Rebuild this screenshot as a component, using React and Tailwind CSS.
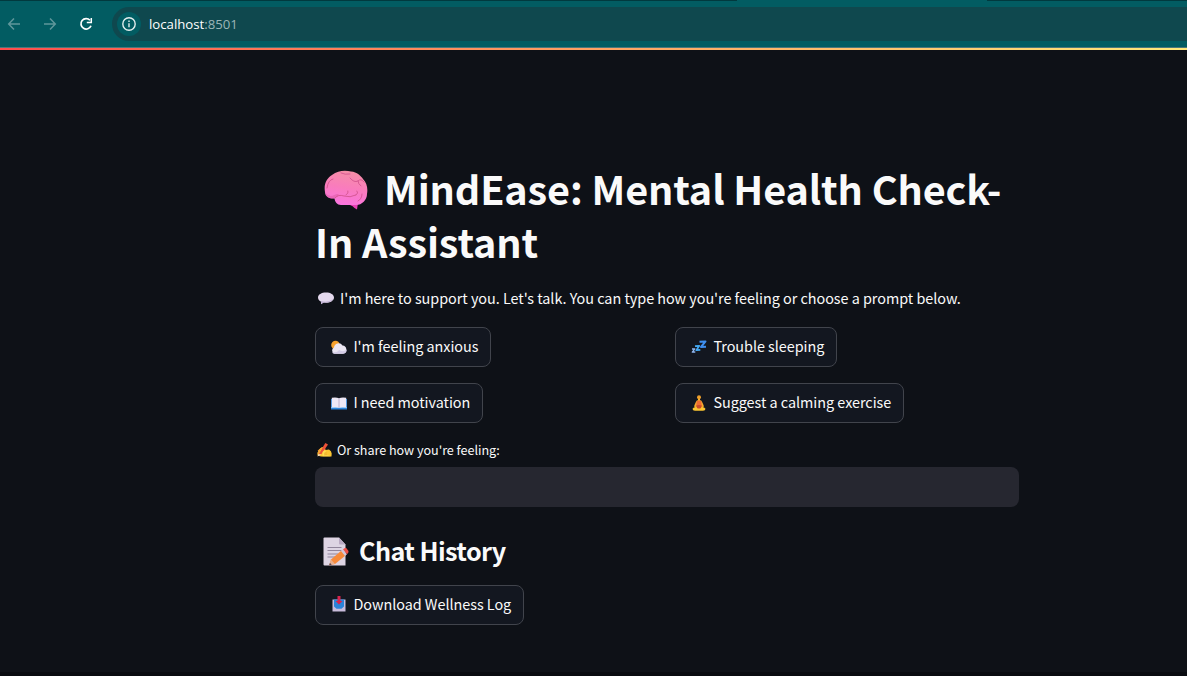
function Brain() {
  return (
    <svg viewBox="0 0 44 40" className="ml-[9px] mr-4 inline-block h-10 w-11 align-[-5px]">
      <defs>
        <linearGradient id="brain" x1="0.6" y1="0" x2="0.4" y2="1">
          <stop offset="0" stopColor="#f58fa6" />
          <stop offset="0.5" stopColor="#f97cbc" />
          <stop offset="1" stopColor="#fb74e0" />
        </linearGradient>
      </defs>
      <path d="M26 33 L34 33 L33 39.5 L30.500 38 Q29 36 26 35Z" fill="#e83fb4" />
      <path
        d="M1 22 C-0.500 14 3 8 8 5 C14 0 22 0 27 1.500 C33 2 37 6 39 9 C43 13 44 19 43 24 C43 30 38 35 32 35 L17 35 C13 35 11 32 10.500 28.500 C6 29 1 27 1 22Z"
        fill="url(#brain)"
      />
      <path d="M1.500 23 Q5 27.500 10.500 25 Q14 23 15 25 Q13 27 10.500 28.500 C6 29 2 27 1.500 23Z" fill="#d9559f" opacity="0.5" />
      <g fill="none" stroke="#d45590" strokeWidth="0.900" strokeLinecap="round">
        <path d="M17 3 Q21 5 26 4" />
        <path d="M26 8 Q30 13 34 11 Q37 8 40 12 M34 11 Q34 14 37 16" />
        <path d="M3 18 Q4 10 9 9" />
        <path d="M11 28 Q14 24 20 26 Q26 28 32 25 M32 25 Q35 23 33 21" />
        <path d="M22 25 Q25 23 24 21 M38 24 Q38 29 34 31" />
      </g>
    </svg>
  );
}

function Bubble() {
  return (
    <svg viewBox="0 0 16 13" className="ml-[3px] mr-[6px] h-[13px] w-4 shrink-0">
      <path d="M8 0.500 C12.500 0.500 16 2.500 16 5.500 C16 8.800 12 10.800 8 10.800 L5.500 10.600 L3 12.300 L3.200 9.800 C1.200 8.800 0 7.300 0 5.500 C0 2.500 3.500 0.500 8 0.500Z" fill="#e4d9ee" />
      <path d="M3 9 Q10 11 15 7 Q13 11 6 10.500 L3 12Z" fill="#c2b2d5" />
    </svg>
  );
}

function Cloud() {
  return (
    <svg viewBox="0 0 16 14" className="h-[14px] w-4">
      <circle cx="4.500" cy="5" r="4.300" fill="#f6a12d" />
      <path d="M3.500 13.800 A3.400 3.400 0 0 1 3 7.500 A4.600 4.600 0 0 1 11.500 5.500 A4.200 4.200 0 0 1 12 13.800Z" fill="#ebe6f3" />
      <path d="M1 12.500 Q7 12.500 8 10 Q12 12.500 15.800 9.500 Q15.500 13.800 11.500 13.800 L3.500 13.800 Q2 13.800 1 12.500Z" fill="#d3cbe6" />
    </svg>
  );
}

function Sleep() {
  return (
    <svg viewBox="0 0 16 14" className="h-[14px] w-4" fill="none" strokeLinejoin="round">
      <path d="M8.500 1.800 L14.500 1.400 L10 7 L15 6.800" stroke="#3f8ff0" strokeWidth="2" />
      <path d="M4 6.200 L8.300 5.800 L5.300 10.200 L9.300 9.800" stroke="#42a9f5" strokeWidth="1.700" />
      <path d="M1 9 L3.800 8.800 L1.300 12.200 L4.300 12" stroke="#8fb6f0" strokeWidth="1.300" />
    </svg>
  );
}

function Book() {
  return (
    <svg viewBox="0 0 16 13" className="mt-px h-[13px] w-4">
      <path d="M0 2 H16 V12.500 H0Z" fill="#2f86dc" />
      <path d="M0 10 H16 V11 H0Z" fill="#75baf5" />
      <path d="M0.800 0.800 Q5 0 8 1.200 Q11 0 15.200 0.800 V10.500 Q11 9.700 8 10.700 Q5 9.700 0.800 10.500Z" fill="#eee8f6" />
      <path d="M8 1.200 V10.700" stroke="#b9acca" strokeWidth="0.900" />
    </svg>
  );
}

function Yoga() {
  return (
    <svg viewBox="0 0 14 16" className="mx-[1px] h-4 w-[14px]">
      <circle cx="7" cy="2.300" r="2" fill="#f0a02b" />
      <path d="M6 4 H8 V6 H6Z" fill="#f6b42d" />
      <path d="M4.800 5.500 Q7 4.700 9.200 5.500 Q11 8 12 11.500 L10.500 12.300 H3.500 L2 11.500 Q3 8 4.800 5.500Z" fill="#f5ab2c" />
      <path d="M4.800 6 Q7 5 9.200 6 L9.800 11.500 H4.200Z" fill="#ee6d34" />
      <path d="M0.500 13.800 Q2 11.500 4.500 12 Q7 10.500 9.500 12 Q12 11.500 13.500 13.800 Q13.500 15.700 11 15.700 H3 Q0.500 15.700 0.500 13.800Z" fill="#fcc631" />
      <path d="M4.200 10.500 Q7 9.500 9.800 10.500 L9 13 Q7 14 5 13Z" fill="#c94a2c" />
    </svg>
  );
}

function Writing() {
  return (
    <svg viewBox="0 0 15 14" className="ml-[2px] mr-[5px] h-[14px] w-[15px] shrink-0">
      <path d="M0.500 12.500 Q0 9.500 2 6.500 L5 4 L8 5 L8.500 7 L12 6.500 Q14.500 8 14.700 10.500 L14.500 13.500 H4Z" fill="#fac532" />
      <path d="M1.500 11.500 L8.300 0 L11 1.500 L4.800 10.800Z" fill="#ed5238" />
      <path d="M0.500 13.500 L1.500 11 L4 11.700Z" fill="#f6dccb" />
      <path d="M5.500 9 Q7.500 6 9 8 L7 11.500 L14 13.300 H5.500Z" fill="#ffdc50" />
      <path d="M1 8.300 L4.500 5.300 M0.900 10.300 L3 8.800" stroke="#f49a35" strokeWidth="1.200" />
      <path d="M7 10.300 L10 9.800 M7 12 L10 11.700" stroke="#e6a32f" strokeWidth="0.600" />
    </svg>
  );
}

function Memo() {
  return (
    <svg viewBox="0 0 26 29" className="mb-[2px] ml-2 mr-[10px] h-[29px] w-[26px] shrink-0">
      <path d="M1.500 0.500 H16 L22.500 7.500 V28.500 H1.500 Q0.500 28.500 0.500 27.500 V1.500 Q0.500 0.500 1.500 0.500Z" fill="#ddd4e3" />
      <path d="M16 0.500 L22.500 7.500 H17 Q16 7.500 16 6.500Z" fill="#b9aac3" />
      <path d="M4.500 10.500 H18.500 M4.500 13.500 H18.500 M4.500 17 H15 M4.500 20 H12" stroke="#91859c" strokeWidth="1" />
      <path d="M8 22.500 L18.500 13.500 L22.500 18.500 L12 27 L6.500 28Z" fill="#f78a3b" />
      <path d="M8 22.500 L12 27 L6 28.500Z" fill="#e9b18f" />
      <path d="M6 28.500 L7 25.800 L8.700 27.900Z" fill="#5a4550" />
      <path d="M18 14 L20 12.300 L24 17.200 L22 18.900Z" fill="#d5c6d8" />
      <path d="M20 12.300 L22 10.900 Q23 10.600 24 11.900 L25.500 14 Q26 15.500 24 17.200Z" fill="#f05148" />
    </svg>
  );
}

function Inbox() {
  return (
    <svg viewBox="0 0 14 16" className="mx-[1px] mb-[2px] h-4 w-[14px]">
      <path d="M0.500 3.500 H13.500 V15.500 H0.500Z" fill="#c9bcdb" />
      <path d="M2 3.500 H12 V10.500 L9.500 12.800 H4.500 L2 10.500Z" fill="#2b83d9" />
      <path d="M5.500 0 H8.500 V5 H10.500 L7 8.500 L3.500 5 H5.500Z" fill="#d8244f" />
    </svg>
  );
}

function PromptButton({ icon, children, className }) {
  return (
    <button className={`flex h-10 items-center gap-[6px] whitespace-nowrap rounded-lg border border-[#41444c] bg-[#131720] pl-[15px] text-[14.4px] leading-6 tracking-[-0.03px] ${className}`}>
      {icon}
      <span className="pb-[2px] pl-[0.4px]">{children}</span>
    </button>
  );
}

function BrowserBar() {
  return (
    <header className="h-[50px] bg-[#025c62]">
      <div className="flex h-px justify-between">
        <div className="w-[737px] bg-[#01393e]" />
        <div className="w-[200px] bg-[#01393e]" />
      </div>
      <div className="flex h-[46px] items-center">
        <svg viewBox="0 0 112 34" className="h-[34px] w-28 shrink-0" fill="none" strokeWidth="1.500">
          <path d="M20 17 H9 M14 11.500 L8.700 17 L14 22.500" stroke="#5f979b" />
          <path d="M44 17 H55 M50 11.500 L55.300 17 L50 22.500" stroke="#5f979b" />
          <path d="M90 13.300 A5.200 5.200 0 1 0 91 18.700" stroke="#fff" strokeWidth="1.700" />
          <path d="M91.300 11 V15.500 H86.800" stroke="#fff" strokeWidth="1.500" />
        </svg>
        <div className="flex h-[34px] flex-1 items-center rounded-l-full bg-[#0f484e] pl-[5px]">
          <div className="flex size-6 items-center justify-center rounded-full bg-[#025c62]">
            <svg viewBox="0 0 14 14" className="size-[14px]" fill="none" stroke="#e3eeee" strokeWidth="1.400">
              <circle cx="7" cy="7" r="6.200" />
              <path d="M7 6.300 V10.300 M7 3.600 V5" />
            </svg>
          </div>
          <span className="ml-2 font-['Open_Sans',sans-serif] text-[13.2px] leading-5 text-[#9bb5b7]">
            <span className="text-white">localhost</span>:8501
          </span>
        </div>
      </div>
      <div className="h-px bg-[#4c777c]" />
      <div className="h-[2px] bg-linear-to-r from-[#ff4b4b] to-[#ffe97a]" />
    </header>
  );
}

export default function App() {
  return (
    <div className="flex h-[676px] flex-col overflow-hidden bg-[#0e1117] font-['Noto_Sans_CJK_SC',sans-serif] text-[#fafafa]">
      <BrowserBar />
      <main className="ml-[315px] flex w-[704px] flex-1 flex-col pt-[111px]">
        <h1 className="whitespace-nowrap text-[39.6px] font-bold leading-[53px] tracking-[-0.13px]">
          <Brain />MindEase: Mental Health Check-<br />In Assistant
        </h1>
        <p className="mt-[19px] flex h-6 items-center whitespace-nowrap text-[14.4px] leading-6 tracking-[-0.03px]">
          <Bubble />
          <span>I'm here to support you. Let's talk. You can type how you're feeling or choose a prompt below.</span>
        </p>
        <div className="mt-[17px] grid grid-cols-[344px_344px] gap-4">
          <PromptButton icon={<Cloud />} className="w-44">I'm feeling anxious</PromptButton>
          <PromptButton icon={<Sleep />} className="w-[162px]">Trouble sleeping</PromptButton>
          <PromptButton icon={<Book />} className="w-[168px]">I need motivation</PromptButton>
          <PromptButton icon={<Yoga />} className="w-[229px]">Suggest a calming exercise</PromptButton>
        </div>
        <label className="mt-[15px] flex h-6 items-center whitespace-nowrap text-[12.6px] leading-6 tracking-[-0.03px]">
          <Writing />
          <span>Or share how you're feeling:</span>
        </label>
        <input className="mt-[5px] h-10 w-full rounded-lg bg-[#262730] px-3 outline-none" />
        <h2 className="mt-[27px] flex h-9 items-center whitespace-nowrap text-[25.2px] font-bold leading-9 tracking-[-0.58px]">
          <Memo />
          <span className="pb-[4px]">Chat History</span>
        </h2>
        <PromptButton icon={<Inbox />} className="mt-[15px] w-[209px]">Download Wellness Log</PromptButton>
      </main>
      <div className="h-1 bg-[#090b10]" />
    </div>
  );
}
